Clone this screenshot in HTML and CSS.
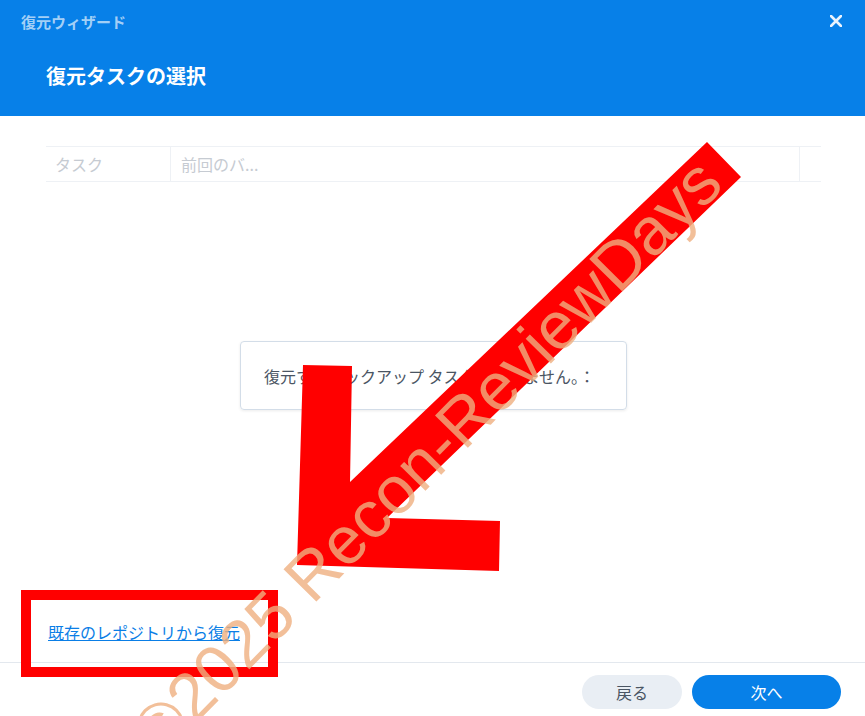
FILE: index.html
```html
<!DOCTYPE html>
<html lang="ja">
<head>
    <meta charset="UTF-8">
    <title>復元ウィザード</title>
    <link rel="stylesheet" href="styles.css">
</head>
<body>
    <div class="wizard">
        <header class="wizard-head">
            <div class="titlebar">
                <span class="app-title">復元ウィザード</span>
                <span class="close-btn">
                    <svg width="12" height="12" viewBox="0 0 12 12">
                        <path d="M1 1 L11 11 M11 1 L1 11" stroke="#eaf3fd" stroke-width="2.6" stroke-linecap="round"/>
                    </svg>
                </span>
            </div>
            <h1 class="step-title">復元タスクの選択</h1>
        </header>

        <main class="wizard-body">
            <div class="grid-head">
                <div class="col col-task">タスク</div>
                <div class="col col-last">前回のバ...</div>
                <div class="col col-end"></div>
            </div>

            <div class="empty-area">
                <div class="empty-box">復元するバックアップ タスクがありません。：</div>
            </div>

            <a class="repo-link" href="#">既存のレポジトリから復元</a>
        </main>

        <footer class="wizard-foot">
            <button class="btn btn-back">戻る</button>
            <button class="btn btn-next">次へ</button>
        </footer>
    </div>

    <!-- annotation layer -->
    <div class="mark-box"></div>
    <svg class="overlay" width="865" height="716" viewBox="0 0 865 716">
        <polygon fill="#ff0000" points="707,142 741,177 387,518 500,521 499,571 297,565 303,365 352,366 350,482"/>
        <text class="watermark" x="160" y="760" transform="rotate(-45.4 160 760)">©2025 Recon-ReviewDays</text>
    </svg>
</body>
</html>
```

FILE: styles.css
```css
body {
    margin: 0;
    font-family: "Noto Sans CJK JP", "Noto Sans", sans-serif;
    background-color: #ffffff;
    position: relative;
    width: 865px;
    height: 716px;
    overflow: hidden;
}
.wizard {
    width: 865px;
    height: 716px;
    display: flex;
    flex-direction: column;
}
.wizard-head {
    height: 116px;
    flex-shrink: 0;
    background-color: #0780e8;
}
.titlebar {
    height: 44px;
    padding: 0 23px 0 21px;
    display: flex;
    align-items: center;
    justify-content: space-between;
}
.app-title {
    font-size: 15px;
    font-weight: bold;
    line-height: 20px;
    color: rgba(255,255,255,0.65);
}
.close-btn {
    display: flex;
    width: 12px;
    height: 12px;
    margin-top: -2px;
}
.step-title {
    margin: 18px 0 0 46px;
    font-size: 20px;
    font-weight: bold;
    line-height: 28px;
    color: #ffffff;
}
.wizard-body {
    flex: 1;
    min-height: 0;
    padding: 30px 44px 0 46px;
    display: flex;
    flex-direction: column;
}
.grid-head {
    height: 36px;
    box-sizing: border-box;
    display: flex;
    border-top: 1px solid #eef1f5;
    border-bottom: 1px solid #eef1f5;
}
.col {
    font-size: 16px;
    line-height: 34px;
    color: #c6cbd2;
    box-sizing: border-box;
}
.col-task {
    width: 125px;
    padding-left: 9px;
    border-right: 1px solid #eef1f5;
}
.col-last {
    flex: 1;
    padding-left: 10px;
    border-right: 1px solid #eef1f5;
}
.col-end {
    width: 21px;
}
.empty-area {
    flex: 1;
    display: flex;
    justify-content: center;
    align-items: flex-start;
    padding-top: 159px;
}
.empty-box {
    width: 387px;
    height: 69px;
    box-sizing: border-box;
    padding: 0 23px;
    display: flex;
    align-items: center;
    border: 1px solid #d3dde8;
    border-radius: 4px;
    box-shadow: 0 1px 3px rgba(0,0,0,0.08);
    font-size: 16px;
    color: #4a5563;
    white-space: nowrap;
}
.repo-link {
    align-self: flex-start;
    margin: 0 0 18px 2px;
    font-size: 16px;
    line-height: 24px;
    color: #0a7ee6;
    text-decoration: underline;
}
.wizard-foot {
    height: 54px;
    flex-shrink: 0;
    box-sizing: border-box;
    border-top: 1px solid #e3e8ee;
    padding: 12px 24px 0 0;
    display: flex;
    justify-content: flex-end;
    align-items: flex-start;
    gap: 10px;
}
.btn {
    height: 34px;
    border: none;
    border-radius: 17px;
    font-family: inherit;
    font-size: 16px;
    line-height: 34px;
    padding: 0;
    cursor: pointer;
}
.btn-back {
    width: 100px;
    background-color: #e9eef4;
    color: #4a5563;
}
.btn-next {
    width: 149px;
    background-color: #0780e8;
    color: #ffffff;
}
.mark-box {
    position: absolute;
    left: 21px;
    top: 590px;
    width: 257px;
    height: 87px;
    box-sizing: border-box;
    border: 10px solid #ff0000;
}
.overlay {
    position: absolute;
    left: 0;
    top: 0;
    pointer-events: none;
}
.watermark {
    font-family: "Liberation Sans", Arial, sans-serif;
    font-size: 67px;
    fill: #f0b080;
    opacity: 0.8;
}
```
